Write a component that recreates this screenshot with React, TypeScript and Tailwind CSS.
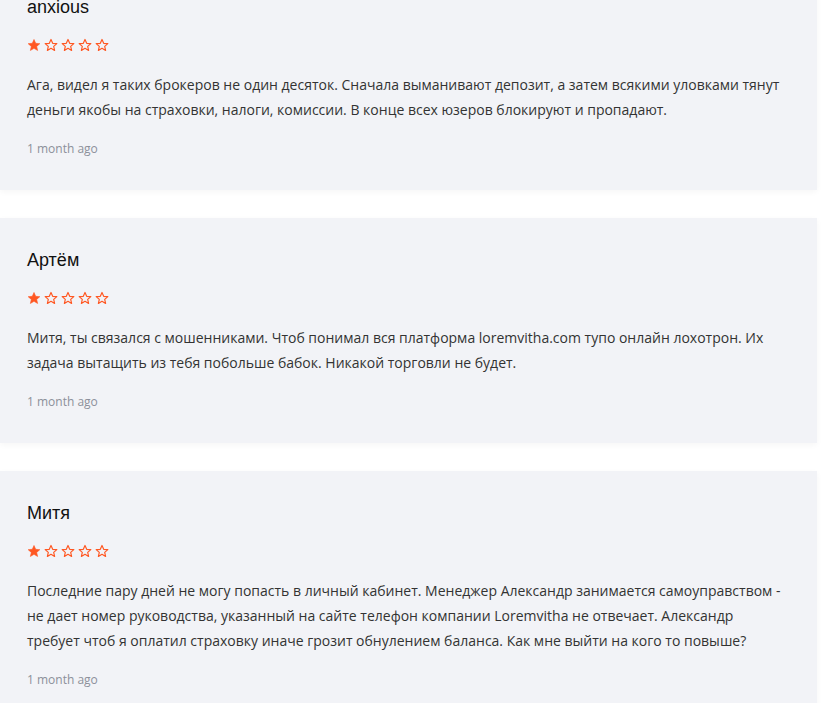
import React from 'react';

interface Review {
  author: string;
  rating: number;
  text: string;
  date: string;
}

const reviews: Review[] = [
  {
    author: 'anxious',
    rating: 1,
    text: 'Ага, видел я таких брокеров не один десяток. Сначала выманивают депозит, а затем всякими уловками тянут деньги якобы на страховки, налоги, комиссии. В конце всех юзеров блокируют и пропадают.',
    date: '1 month ago',
  },
  {
    author: 'Артём',
    rating: 1,
    text: 'Митя, ты связался с мошенниками. Чтоб понимал вся платформа loremvitha.com тупо онлайн лохотрон. Их задача вытащить из тебя побольше бабок. Никакой торговли не будет.',
    date: '1 month ago',
  },
  {
    author: 'Митя',
    rating: 1,
    text: 'Последние пару дней не могу попасть в личный кабинет. Менеджер Александр занимается самоуправством - не дает номер руководства, указанный на сайте телефон компании Loremvitha не отвечает. Александр требует чтоб я оплатил страховку иначе грозит обнулением баланса. Как мне выйти на кого то повыше?',
    date: '1 month ago',
  },
];

function Star({ filled }: { filled: boolean }) {
  return (
    <svg width="14" height="14" viewBox="0 0 24 24" className="shrink-0">
      <path
        d="M12 2.5l2.9 6.6 7.1.6-5.4 4.7 1.6 7-6.2-3.7-6.2 3.7 1.6-7L2 9.7l7.1-.6z"
        fill={filled ? '#ff5722' : 'none'}
        stroke="#ff5722"
        strokeWidth={filled ? 1 : 2}
        strokeLinejoin="round"
      />
    </svg>
  );
}

function ReviewCard({ review, first }: { review: Review; first?: boolean }) {
  return (
    <div
      className={`bg-[#f2f3f7] shadow-[0_2px_6px_rgba(0,0,0,0.04)] pl-[27px] pr-8 pt-[31px] pb-[33px] ${first ? '-mt-[35px]' : ''}`}
    >
      <h3 className="text-[18px] leading-[22px] text-[#111] font-['Liberation_Sans',Arial,sans-serif]">
        {review.author}
      </h3>
      <div className="flex gap-[3px] mt-[20px]">
        {[0, 1, 2, 3, 4].map((i) => (
          <Star key={i} filled={i < review.rating} />
        ))}
      </div>
      <p className="mt-[20px] text-[14px] leading-[25px] text-[#333] font-['Open_Sans',sans-serif]">
        {review.text}
      </p>
      <div className="mt-[19px] text-[12px] leading-[16px] text-[#8c909a] font-['Open_Sans',sans-serif]">
        {review.date}
      </div>
    </div>
  );
}

export default function App() {
  return (
    <div className="bg-white w-[822px] h-[703px] overflow-hidden">
      <div className="w-[817px] flex flex-col gap-[28px]">
        {reviews.map((r, i) => (
          <ReviewCard key={i} review={r} first={i === 0} />
        ))}
      </div>
    </div>
  );
}
